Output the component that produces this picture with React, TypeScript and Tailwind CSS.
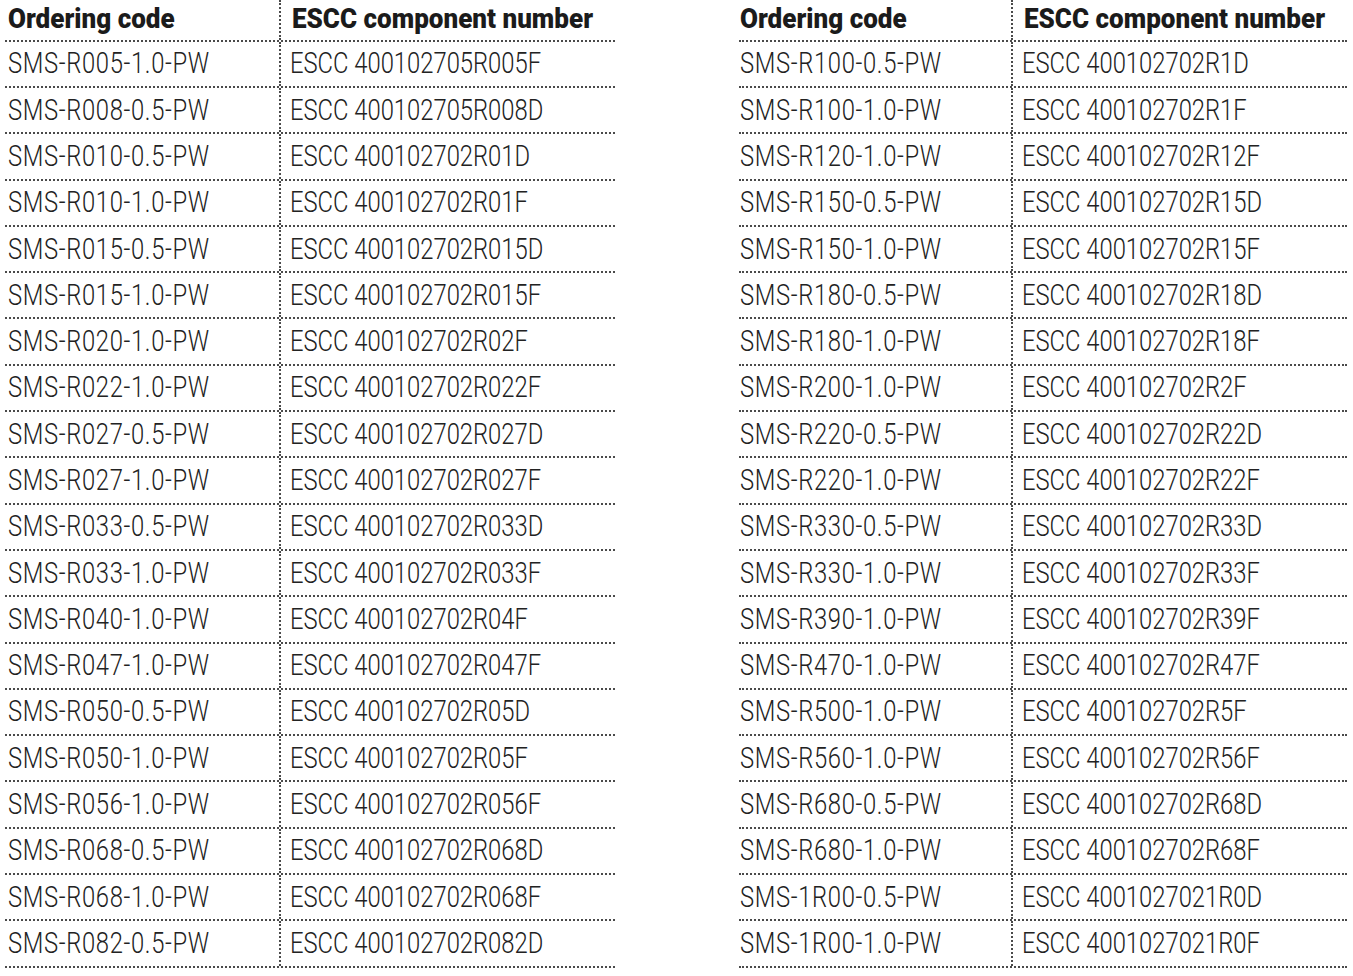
const left: [string, string][] = [
  ["SMS-R005-1.0-PW", "ESCC 400102705R005F"],
  ["SMS-R008-0.5-PW", "ESCC 400102705R008D"],
  ["SMS-R010-0.5-PW", "ESCC 400102702R01D"],
  ["SMS-R010-1.0-PW", "ESCC 400102702R01F"],
  ["SMS-R015-0.5-PW", "ESCC 400102702R015D"],
  ["SMS-R015-1.0-PW", "ESCC 400102702R015F"],
  ["SMS-R020-1.0-PW", "ESCC 400102702R02F"],
  ["SMS-R022-1.0-PW", "ESCC 400102702R022F"],
  ["SMS-R027-0.5-PW", "ESCC 400102702R027D"],
  ["SMS-R027-1.0-PW", "ESCC 400102702R027F"],
  ["SMS-R033-0.5-PW", "ESCC 400102702R033D"],
  ["SMS-R033-1.0-PW", "ESCC 400102702R033F"],
  ["SMS-R040-1.0-PW", "ESCC 400102702R04F"],
  ["SMS-R047-1.0-PW", "ESCC 400102702R047F"],
  ["SMS-R050-0.5-PW", "ESCC 400102702R05D"],
  ["SMS-R050-1.0-PW", "ESCC 400102702R05F"],
  ["SMS-R056-1.0-PW", "ESCC 400102702R056F"],
  ["SMS-R068-0.5-PW", "ESCC 400102702R068D"],
  ["SMS-R068-1.0-PW", "ESCC 400102702R068F"],
  ["SMS-R082-0.5-PW", "ESCC 400102702R082D"],
];

const right: [string, string][] = [
  ["SMS-R100-0.5-PW", "ESCC 400102702R1D"],
  ["SMS-R100-1.0-PW", "ESCC 400102702R1F"],
  ["SMS-R120-1.0-PW", "ESCC 400102702R12F"],
  ["SMS-R150-0.5-PW", "ESCC 400102702R15D"],
  ["SMS-R150-1.0-PW", "ESCC 400102702R15F"],
  ["SMS-R180-0.5-PW", "ESCC 400102702R18D"],
  ["SMS-R180-1.0-PW", "ESCC 400102702R18F"],
  ["SMS-R200-1.0-PW", "ESCC 400102702R2F"],
  ["SMS-R220-0.5-PW", "ESCC 400102702R22D"],
  ["SMS-R220-1.0-PW", "ESCC 400102702R22F"],
  ["SMS-R330-0.5-PW", "ESCC 400102702R33D"],
  ["SMS-R330-1.0-PW", "ESCC 400102702R33F"],
  ["SMS-R390-1.0-PW", "ESCC 400102702R39F"],
  ["SMS-R470-1.0-PW", "ESCC 400102702R47F"],
  ["SMS-R500-1.0-PW", "ESCC 400102702R5F"],
  ["SMS-R560-1.0-PW", "ESCC 400102702R56F"],
  ["SMS-R680-0.5-PW", "ESCC 400102702R68D"],
  ["SMS-R680-1.0-PW", "ESCC 400102702R68F"],
  ["SMS-1R00-0.5-PW", "ESCC 4001027021R0D"],
  ["SMS-1R00-1.0-PW", "ESCC 4001027021R0F"],
];

// condensed look: Roboto squeezed horizontally
const head = "inline-block whitespace-nowrap origin-left scale-x-[0.93] font-black text-[28px] text-[#1b1b1b]";
const body = "inline-block whitespace-nowrap origin-left scale-x-[0.82] font-light text-[29px] text-[#222]";

type Props = { rows: [string, string][]; firstCol: string; pad: string; className: string };

function CodeTable({ rows, firstCol, pad, className }: Props) {
  return (
    <div className={className}>
      <div className={`grid ${firstCol} h-[41.7px] border-b-2 border-dotted border-[#4a4a4a]`}>
        <div className={`flex items-center ${pad} pb-[2px] border-r-2 border-dotted border-[#4a4a4a]`}>
          <span className={head}>Ordering code</span>
        </div>
        <div className="flex items-center pl-[11px] pb-[2px]">
          <span className={head}>ESCC component number</span>
        </div>
      </div>
      {rows.map(([code, escc]) => (
        <div key={code} className={`grid ${firstCol} h-[46.3px] border-b-2 border-dotted border-[#4a4a4a]`}>
          <div className={`flex items-center ${pad} border-r-2 border-dotted border-[#4a4a4a]`}>
            <span className={`${body} tracking-[0.8px]`}>{code}</span>
          </div>
          <div className="flex items-center pl-[9px]">
            <span className={body}>{escc}</span>
          </div>
        </div>
      ))}
    </div>
  );
}

export default function App() {
  return (
    <div
      className="w-[1353px] h-[976px] bg-white flex overflow-hidden leading-none"
      style={{ fontFamily: "Roboto, 'Liberation Sans', sans-serif" }}
    >
      <CodeTable rows={left} firstCol="grid-cols-[276px_1fr]" pad="pl-[3px]" className="ml-[5px] w-[610px]" />
      <CodeTable rows={right} firstCol="grid-cols-[274px_1fr]" pad="pl-[1px]" className="ml-[124px] w-[608px]" />
    </div>
  );
}
